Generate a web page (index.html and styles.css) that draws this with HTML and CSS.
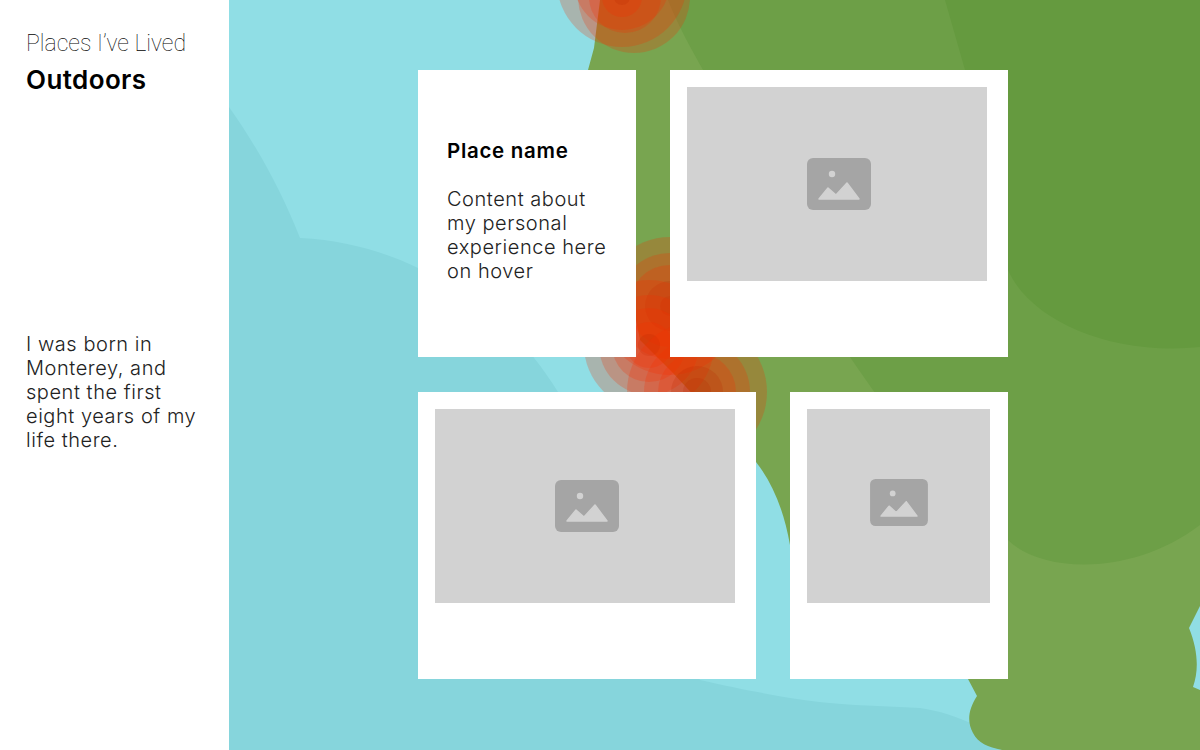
FILE: index.html
```html
<!DOCTYPE html>
<html lang="en">
<head>
    <meta charset="UTF-8">
    <title>Places I've Lived</title>
    <link rel="stylesheet" href="styles.css">
</head>
<body>
    <div class="sidebar">
        <div class="site-title">Places I’ve Lived</div>
        <h1 class="page-title">Outdoors</h1>
        <p class="intro">I was born in Monterey, and spent the first eight years of my life there.</p>
    </div>

    <div class="main">
        <!--map behind the cards, coordinates are page minus the 229px sidebar-->
        <svg class="map" width="971" height="750" viewBox="229 0 971 750">
            <path fill="#86d5dc" d="M229 107 C258 148 281 190 300 238 C345 240 385 252 418 268 C470 292 520 330 558 392 L640 560 L700 680 C735 688 756 692 790 698 C830 705 880 706 920 708 C940 711 955 716 975 725 L1000 750 L229 750 Z"/>
            <path fill="#78a550" d="M600 0 L594 48 L588 70 L620 240 L640 340 L672 372 L756 462 C772 482 784 510 790 545 L900 640 L968 679 L977 696 C968 710 967 722 973 733 C978 743 988 747 1002 750 L1200 750 L1200 690 L1193 687 C1199 670 1198 650 1189 628 L1200 606 L1200 0 Z"/>
            <path fill="#6d9f47" d="M668 0 C680 30 692 50 703 70 L850 357 C900 430 950 500 1008 540 C1040 572 1130 578 1200 525 L1200 0 Z"/>
            <path fill="#659a3f" d="M945 0 L965 70 L1008 270 C1030 320 1110 356 1200 347 L1200 0 Z"/>

            <g class="rings">
                <circle cx="622" cy="-18" r="65"/>
                <circle cx="622" cy="-18" r="48"/>
                <circle cx="634" cy="-3" r="56"/>
                <circle cx="625" cy="-3" r="36"/>
                <circle cx="622" cy="-3" r="20"/>
                <circle class="inner" cx="622" cy="-3" r="8"/>
            </g>
            <g class="rings">
                <circle cx="670" cy="306" r="69"/>
                <circle cx="670" cy="306" r="53"/>
                <circle cx="670" cy="306" r="41"/>
                <circle class="inner" cx="670" cy="306" r="25"/>
                <circle class="inner" cx="670" cy="306" r="10"/>
            </g>
            <g class="rings">
                <circle cx="649" cy="345" r="65"/>
                <circle cx="649" cy="345" r="50"/>
                <circle cx="649" cy="345" r="37"/>
                <circle cx="649" cy="345" r="23"/>
                <circle class="inner" cx="649" cy="345" r="11"/>
            </g>
            <g class="rings">
                <circle cx="697" cy="392" r="70"/>
                <circle cx="697" cy="392" r="53"/>
                <circle cx="697" cy="392" r="39"/>
                <circle class="inner" cx="697" cy="392" r="26"/>
                <circle class="inner" cx="697" cy="392" r="14"/>
            </g>
        </svg>

        <div class="cards">
            <div class="row">
                <div class="card card-small card-text">
                    <h2>Place name</h2>
                    <p>Content about my personal experience here on hover</p>
                </div>
                <div class="card card-wide">
                    <div class="photo">
                        <svg class="icon" width="64" height="52" viewBox="0 0 64 52"><rect width="64" height="52" rx="6" fill="#a5a5a5"/><circle cx="25" cy="16" r="3.2" fill="#d2d2d2"/><path class="hills" d="M12 41 L21 30 L29 37 L40 25 L52 41 Z"/></svg>
                    </div>
                </div>
            </div>
            <div class="row">
                <div class="card card-wide">
                    <div class="photo">
                        <svg class="icon" width="64" height="52" viewBox="0 0 64 52"><rect width="64" height="52" rx="6" fill="#a5a5a5"/><circle cx="25" cy="16" r="3.2" fill="#d2d2d2"/><path class="hills" d="M12 41 L21 30 L29 37 L40 25 L52 41 Z"/></svg>
                    </div>
                </div>
                <div class="card card-small">
                    <div class="photo photo-small">
                        <svg class="icon" width="58" height="47" viewBox="0 0 64 52"><rect width="64" height="52" rx="6" fill="#a5a5a5"/><circle cx="25" cy="16" r="3.2" fill="#d2d2d2"/><path class="hills" d="M12 41 L21 30 L29 37 L40 25 L52 41 Z"/></svg>
                    </div>
                </div>
            </div>
        </div>
    </div>
</body>
</html>
```

FILE: styles.css
```css
*{
    box-sizing: border-box;
}

body{
    margin: 0;
    height: 750px;
    overflow: hidden;
    display: flex;
    font-family: Inter, "Liberation Sans", sans-serif;
    color: #000;
}

/*左侧栏*/
.sidebar{
    width: 229px;
    flex-shrink: 0;
    padding: 30px 26px 0;
    background-color: #fff;
}

.site-title{
    font-family: Roboto, sans-serif;
    font-weight: 100;
    font-size: 23px;
    line-height: 28px;
    white-space: nowrap;
    color: #000;
}

.page-title{
    margin: 7px 0 0;
    font-size: 26px;
    line-height: 30px;
    letter-spacing: 0.4px;
    font-weight: 600;
}

.intro{
    margin: 237px 0 0;
    font-size: 20px;
    line-height: 24px;
    letter-spacing: 0.55px;
    font-weight: 300;
    color: #222;
}

/*地图*/
.main{
    position: relative;
    flex: 1;
    background-color: #90dee5;
}

.map{
    position: absolute;
    left: 0;
    top: 0;
}

.rings circle{
    fill: #f53000;
    opacity: 0.24;
}

.rings .inner{
    fill: #b82800;
    opacity: 0.2;
}

/*卡片*/
.cards{
    position: relative;
    padding: 70px 0 0 189px;
}

.row{
    display: flex;
    gap: 34px;
    margin-bottom: 35px;
}

.card{
    height: 287px;
    padding: 17px;
    background-color: #fff;
}

.card-small{
    width: 218px;
}

.card-wide{
    width: 338px;
}

.card-text{
    padding: 69px 29px 0;
}

.card-text h2{
    margin: 0 0 24px;
    font-size: 20.5px;
    line-height: 24px;
    letter-spacing: 0.7px;
    font-weight: 600;
}

.card-text p{
    margin: 0;
    font-size: 20px;
    line-height: 24px;
    letter-spacing: 0.55px;
    font-weight: 300;
    color: #222;
}

.photo{
    width: 300px;
    height: 194px;
    padding-left: 4px;
    display: flex;
    align-items: center;
    justify-content: center;
    background-color: #d2d2d2;
}

.photo-small{
    width: 183px;
    padding: 0 0 8px;
}

.icon{
    display: block;
}

.hills{
    fill: #d2d2d2;
    stroke: #d2d2d2;
    stroke-width: 1.5;
    stroke-linejoin: round;
}
```
